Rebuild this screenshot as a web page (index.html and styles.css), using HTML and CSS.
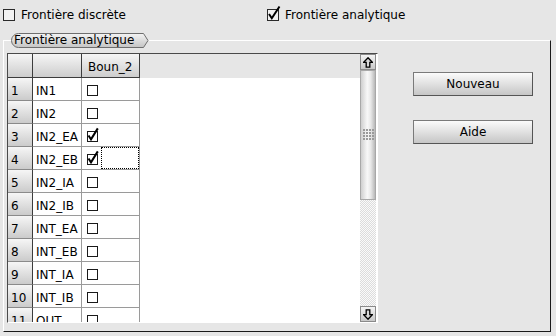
FILE: index.html
```html
<!DOCTYPE html>
<html lang="fr">
<head>
  <meta charset="UTF-8" />
  <title>Frontières</title>
  <link rel="stylesheet" href="styles.css">
</head>
<body>
  <div class="options">
    <label class="opt"><span class="box"></span>Frontière discrète</label>
    <label class="opt"><span class="box"><svg class="tick-big" width="16" height="16" viewBox="-1 -4 16 16"><path d="M2 5 L4.8 9.2 L12.5 -2.5" /></svg></span>Frontière analytique</label>
  </div>

  <div class="group">
    <div class="tab">
      <svg class="tab-bg" width="138" height="15" viewBox="0 0 138 15">
        <defs>
          <linearGradient id="tabFill" x1="0" y1="0" x2="0" y2="1">
            <stop offset="0" stop-color="#f4f4f4" />
            <stop offset="1" stop-color="#c4c4c4" />
          </linearGradient>
        </defs>
        <path d="M7.5 0.5 H132.5 L137 7.5 L132.5 14.5 H7.5 A7 7 0 0 1 7.5 0.5 Z" fill="url(#tabFill)" stroke="#6e6e6e" />
      </svg>
      <span class="tab-text">Frontière analytique</span>
    </div>

    <div class="group-body">
      <div class="sheet">
        <div class="grid">
          <div class="hd corner"></div>
          <div class="hd"></div>
          <div class="hd">Boun_2</div>
          <div class="hd filler"></div>

          <div class="rh">1</div><div class="name">IN1</div><div class="cbc"><span class="cb"></span></div><div class="blank"></div>
          <div class="rh">2</div><div class="name">IN2</div><div class="cbc"><span class="cb"></span></div><div class="blank"></div>
          <div class="rh">3</div><div class="name">IN2_EA</div><div class="cbc"><span class="cb"><svg class="tick" width="14" height="15" viewBox="-1 -4 14 15"><path d="M1.5 4.5 L4 8.3 L10.8 -2.6" /></svg></span></div><div class="blank"></div>
          <div class="rh">4</div><div class="name">IN2_EB</div><div class="cbc"><span class="cb"><svg class="tick" width="14" height="15" viewBox="-1 -4 14 15"><path d="M1.5 4.5 L4 8.3 L10.8 -2.6" /></svg></span><span class="focus"></span></div><div class="blank"></div>
          <div class="rh">5</div><div class="name">IN2_IA</div><div class="cbc"><span class="cb"></span></div><div class="blank"></div>
          <div class="rh">6</div><div class="name">IN2_IB</div><div class="cbc"><span class="cb"></span></div><div class="blank"></div>
          <div class="rh">7</div><div class="name">INT_EA</div><div class="cbc"><span class="cb"></span></div><div class="blank"></div>
          <div class="rh">8</div><div class="name">INT_EB</div><div class="cbc"><span class="cb"></span></div><div class="blank"></div>
          <div class="rh">9</div><div class="name">INT_IA</div><div class="cbc"><span class="cb"></span></div><div class="blank"></div>
          <div class="rh">10</div><div class="name">INT_IB</div><div class="cbc"><span class="cb"></span></div><div class="blank"></div>
          <div class="rh">11</div><div class="name">OUT</div><div class="cbc"><span class="cb"></span></div><div class="blank"></div>
        </div>

        <div class="scrollbar">
          <div class="sb-btn">
            <svg width="10" height="11" viewBox="0 0 10 11"><path d="M5 0.8 L9.3 5.3 L6.8 5.3 L6.8 10.2 L3.2 10.2 L3.2 5.3 L0.7 5.3 Z" /></svg>
          </div>
          <div class="sb-thumb">
            <svg width="11" height="13" viewBox="0 0 11 13">
              <g fill="#9a9a9a">
                <rect x="0" y="0" width="2" height="2" /><rect x="3" y="0" width="2" height="2" /><rect x="6" y="0" width="2" height="2" /><rect x="9" y="0" width="2" height="2" />
                <rect x="0" y="3" width="2" height="2" /><rect x="3" y="3" width="2" height="2" /><rect x="6" y="3" width="2" height="2" /><rect x="9" y="3" width="2" height="2" />
                <rect x="0" y="6" width="2" height="2" /><rect x="3" y="6" width="2" height="2" /><rect x="6" y="6" width="2" height="2" /><rect x="9" y="6" width="2" height="2" />
                <rect x="0" y="9" width="2" height="2" /><rect x="3" y="9" width="2" height="2" /><rect x="6" y="9" width="2" height="2" /><rect x="9" y="9" width="2" height="2" />
              </g>
            </svg>
          </div>
          <div class="sb-track"></div>
          <div class="sb-btn">
            <svg width="10" height="11" viewBox="0 0 10 11"><path d="M5 10.2 L9.3 5.7 L6.8 5.7 L6.8 0.8 L3.2 0.8 L3.2 5.7 L0.7 5.7 Z" /></svg>
          </div>
        </div>
      </div>

      <div class="actions">
        <button class="btn">Nouveau</button>
        <button class="btn">Aide</button>
      </div>
    </div>
  </div>
</body>
</html>
```

FILE: styles.css
```css
body {
  margin: 0;
  width: 556px;
  height: 336px;
  overflow: hidden;
  background-color: #e6e6e6;
  font-family: "DejaVu Sans", sans-serif;
  font-size: 12px;
  line-height: 14px;
  color: #000;
}

/* top check options */
.options {
  display: grid;
  grid-template-columns: 264px auto;
  height: 40px;
  padding: 8px 0 0 3px;
  box-sizing: border-box;
}

.opt {
  display: flex;
  align-items: center;
  gap: 6px;
  height: 14px;
}

.box {
  position: relative;
  width: 12px;
  height: 12px;
  box-sizing: border-box;
  border: 1px solid #2a2a2a;
  background-color: #f2f2f2;
}

.tick-big {
  position: absolute;
  left: -2px;
  top: -5px;
  overflow: visible;
}

.tick-big path,
.tick path {
  fill: none;
  stroke: #000;
  stroke-width: 2;
}

/* group box */
.group {
  margin-left: 3px;
  width: 548px;
  height: 292px;
  box-sizing: border-box;
  border-top: 1px solid #fff;
  border-left: 1px solid #fff;
  border-right: 1px solid #1a1a1a;
  border-bottom: 1px solid #1a1a1a;
}

.tab {
  position: relative;
  width: 138px;
  height: 15px;
  margin: -8px 0 0 7px;
}

.tab-bg {
  position: absolute;
  left: 0;
  top: 0;
}

.tab-text {
  position: relative;
  display: block;
  padding-left: 3px;
  line-height: 14px;
}

.group-body {
  display: flex;
  padding: 5px 0 0 3px;
}

/* sheet */
.sheet {
  display: flex;
  width: 371px;
  height: 270px;
  box-sizing: border-box;
  border-top: 1px solid #4a4a4a;
  border-left: 1px solid #4a4a4a;
  border-right: 1px solid #fff;
  border-bottom: 1px solid #fff;
  background-color: #fff;
}

.grid {
  flex: 1;
  display: grid;
  grid-template-columns: 25px 49px 58px 1fr;
  grid-template-rows: 24px;
  grid-auto-rows: 23px;
  overflow: hidden;
}

.grid > div {
  box-sizing: border-box;
}

.hd {
  background: linear-gradient(#f6f6f6, #cdcdcd);
  border-right: 1px solid #3c3c3c;
  border-bottom: 1px solid #3c3c3c;
  padding: 6px 0 0 6px;
}

.hd.filler {
  background: #e6e6e6;
  border: none;
}

.rh {
  background: linear-gradient(#f6f6f6, #cbcbcb);
  border-right: 1px solid #3c3c3c;
  border-bottom: 1px solid #8a8a8a;
  padding: 6px 0 0 3px;
}

.name {
  border-right: 1px solid #9a9a9a;
  border-bottom: 1px solid #9a9a9a;
  padding: 6px 0 0 3px;
}

.cbc {
  display: flex;
  border-right: 1px solid #9a9a9a;
  border-bottom: 1px solid #9a9a9a;
}

.cb {
  position: relative;
  width: 11px;
  height: 11px;
  box-sizing: border-box;
  margin: 7px 0 0 5px;
  border: 1px solid #1a1a1a;
  background-color: #fff;
}

.tick {
  position: absolute;
  left: -2px;
  top: -5px;
  overflow: visible;
}

.focus {
  flex: 1;
  margin-left: 3px;
  border: 1px dotted #000;
}

/* scrollbar */
.scrollbar {
  display: flex;
  flex-direction: column;
  width: 16px;
  margin-right: 1px;
}

.sb-btn {
  display: flex;
  align-items: center;
  justify-content: center;
  height: 16px;
  box-sizing: border-box;
  border: 1px solid #8a8a8a;
  background: linear-gradient(#f4f4f4, #c8c8c8);
}

.sb-btn path {
  fill: #d8d8d8;
  stroke: #000;
  stroke-width: 1.3;
}

.sb-thumb {
  display: flex;
  align-items: center;
  justify-content: center;
  height: 130px;
  box-sizing: border-box;
  border: 1px solid #a8a8a8;
  background: linear-gradient(90deg, #cfcfcf, #f8f8f8 45%, #e8e8e8 70%, #b8b8b8);
}

.sb-track {
  flex: 1;
  background: repeating-conic-gradient(#dcdcdc 0 25%, #fafafa 0 50%) 0 0 / 2px 2px;
}

/* side buttons */
.actions {
  display: flex;
  flex-direction: column;
  gap: 24px;
  margin-left: 35px;
  padding-top: 19px;
}

.btn {
  width: 120px;
  height: 24px;
  padding: 0;
  border: 1px solid #7a7a7a;
  border-right-color: #555;
  border-bottom-color: #555;
  background: linear-gradient(#fbfbfb, #c6c6c6);
  font-family: "DejaVu Sans", sans-serif;
  font-size: 12px;
  color: #000;
}
```
